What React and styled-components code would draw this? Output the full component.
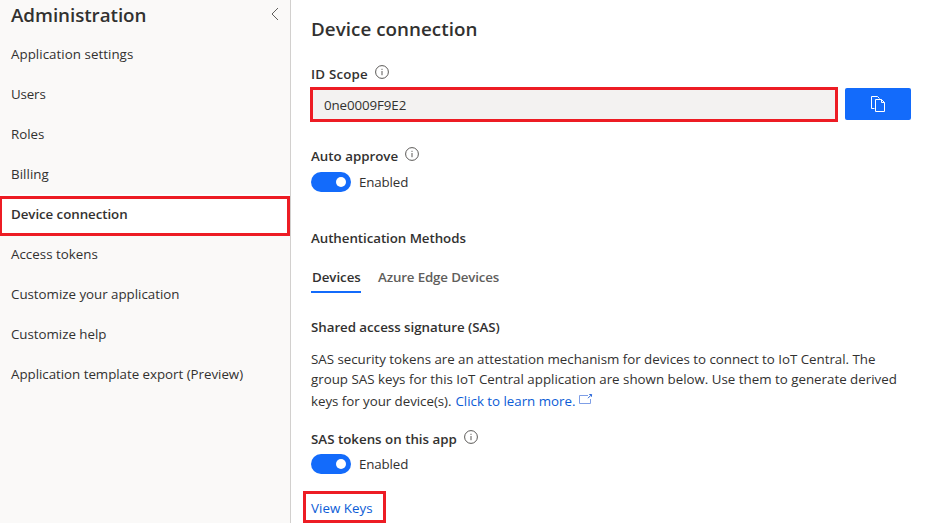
import React from 'react';
import styled, { createGlobalStyle } from 'styled-components';

const GlobalStyle = createGlobalStyle`
  * { box-sizing: border-box; }
  body {
    margin: 0;
    overflow: hidden;
    background: #fff;
    color: #323130;
    font: 400 13.33px/20px "Open Sans", "Noto Sans", sans-serif;
  }
`;

const Page = styled.div`
  display: flex;
  width: 932px;
  height: 523px;
  overflow: hidden;
`;

const Sidebar = styled.nav`
  width: 291px;
  flex: none;
  background: #faf9f8;
  border-right: 1px solid #d2d0ce;
`;

const SidebarHeader = styled.div`
  display: flex;
  align-items: flex-start;
  justify-content: space-between;
  height: 34px;
  padding: 0 11px;
`;

const SidebarTitle = styled.h1`
  margin: 0;
  font-size: 18.8px;
  font-weight: 600;
  line-height: 31px;
  letter-spacing: -0.05px;
`;

const Collapse = styled.svg`
  width: 8px;
  height: 14px;
  margin-top: 7px;
  fill: none;
  stroke: #605e5c;
`;

const NavItem = styled.a`
  position: relative;
  display: flex;
  align-items: center;
  height: 40px;
  padding-left: 11px;
  white-space: nowrap;
  background: ${(p) => (p.$active ? '#fff' : 'transparent')};
  font-weight: ${(p) => (p.$active ? 600 : 400)};
  letter-spacing: ${(p) => p.$track || 0}px;
`;

const NavHighlight = styled.span`
  position: absolute;
  top: 2px;
  left: -1px;
  width: 291px;
  height: 40px;
  border: 3px solid #ed1c24;
  z-index: 1;
`;

const Main = styled.main`
  flex: 1;
  padding: 14px 0 0 20px;
`;

const Heading = styled.h2`
  margin: 0;
  font-size: 18.8px;
  font-weight: 600;
  line-height: 30px;
  letter-spacing: 0.04px;
`;

const Label = styled.div`
  display: flex;
  height: 20px;
  margin-top: ${(p) => p.$top}px;
  font-weight: 600;
  letter-spacing: ${(p) => p.$track || 0}px;
`;

const Info = styled.svg`
  width: 14px;
  height: 14px;
  margin: 1px 0 0 7px;
  fill: none;
  stroke: #484644;
`;

const ScopeRow = styled.div`
  display: flex;
  align-items: flex-start;
  gap: 7px;
  height: 35px;
  margin: 3px 0 0 -1px;
`;

const ScopeField = styled.div`
  width: 528px;
  height: 35px;
  padding-left: 11px;
  line-height: 30px;
  letter-spacing: -0.1px;
  background: #f3f2f1;
  border: 3px solid #ed1c24;
`;

const CopyButton = styled.button`
  display: flex;
  align-items: center;
  justify-content: center;
  width: 66px;
  height: 32px;
  margin-top: 1px;
  padding: 0;
  border: 0;
  border-radius: 2px;
  background: #136bfb;

  svg {
    width: 16px;
    height: 16px;
    fill: none;
    stroke: #fff;
  }
`;

const ToggleRow = styled.div`
  display: flex;
  align-items: center;
  gap: 8px;
  height: 20px;
  margin-top: ${(p) => p.$top}px;
  letter-spacing: -0.14px;
`;

const Switch = styled.span`
  display: flex;
  align-items: center;
  justify-content: flex-end;
  width: 40px;
  height: 20px;
  padding-right: 5px;
  border-radius: 10px;
  background: #136bfb;

  &::after {
    content: '';
    width: 10px;
    height: 10px;
    border-radius: 50%;
    background: #fff;
  }
`;

const Tabs = styled.div`
  display: flex;
  gap: 17px;
  height: 26px;
  margin-top: 19px;
`;

const Tab = styled.span`
  height: 26px;
  padding-left: ${(p) => (p.$active ? 1 : 0)}px;
  width: ${(p) => (p.$active ? '50px' : 'auto')};
  font-weight: 600;
  letter-spacing: ${(p) => (p.$active ? -0.05 : -0.15)}px;
  color: ${(p) => (p.$active ? '#323130' : '#605e5c')};
  border-bottom: 2px solid ${(p) => (p.$active ? '#136bfb' : 'transparent')};
`;

const Paragraph = styled.div`
  margin-top: 12px;
  white-space: nowrap;
`;

const Line = styled.div`
  display: flex;
  margin-top: ${(p) => p.$top || 0}px;
  letter-spacing: ${(p) => p.$track || 0}px;
`;

const Link = styled.a`
  color: #0b5cd6;
  letter-spacing: ${(p) => p.$track || 0}px;
  margin-left: ${(p) => p.$gap || 0}px;
`;

const External = styled.svg`
  width: 14px;
  height: 12px;
  margin: 2px 0 0 4px;
  fill: none;
  stroke: #7f9fe6;
`;

const KeysBox = styled.div`
  width: 83px;
  height: 32px;
  margin: 17px 0 0 -8px;
  padding-left: 5px;
  line-height: 28px;
  border: 3px solid #ed1c24;
`;

const navItems = [
  { label: 'Application settings', track: 0.04 },
  { label: 'Users', track: -0.15 },
  { label: 'Roles' },
  { label: 'Billing', track: 0.05 },
  { label: 'Device connection', active: true, track: -0.06 },
  { label: 'Access tokens', track: 0.02 },
  { label: 'Customize your application', track: -0.02 },
  { label: 'Customize help', track: -0.03 },
  { label: 'Application template export (Preview)', track: -0.03 },
];

const InfoIcon = () => (
  <Info viewBox="0 0 14 14">
    <circle cx="7" cy="7" r="6.4" strokeWidth="0.9" />
    <path d="M7 6v4.2M7 3.8v1.1" strokeWidth="0.9" />
  </Info>
);

export default function App() {
  return (
    <>
      <GlobalStyle />
      <Page>
        <Sidebar>
          <SidebarHeader>
            <SidebarTitle>Administration</SidebarTitle>
            <Collapse viewBox="0 0 8 14">
              <path d="M7 1L1 7l6 6" />
            </Collapse>
          </SidebarHeader>
          {navItems.map((item) => (
            <NavItem key={item.label} $active={item.active} $track={item.track}>
              {item.label}
              {item.active && <NavHighlight />}
            </NavItem>
          ))}
        </Sidebar>
        <Main>
          <Heading>Device connection</Heading>
          <Label $top={20} $track={0.2}>ID Scope <InfoIcon /></Label>
          <ScopeRow>
            <ScopeField>0ne0009F9E2</ScopeField>
            <CopyButton aria-label="Copy">
              <svg viewBox="0 0 16 16">
                <path d="M4.5 12.5h-3v-12h6l2 2M5.5 15.5v-12h6l3 3v9zM11.5 3.5v3h3" />
              </svg>
            </CopyButton>
          </ScopeRow>
          <Label $top={24}>Auto approve <InfoIcon /></Label>
          <ToggleRow $top={6}><Switch />Enabled</ToggleRow>
          <Label $top={36} $track={-0.06}>Authentication Methods</Label>
          <Tabs>
            <Tab $active>Devices</Tab>
            <Tab>Azure Edge Devices</Tab>
          </Tabs>
          <Label $top={24} $track={-0.05}>Shared access signature (SAS)</Label>
          <Paragraph>
            <Line $track={-0.022}>SAS security tokens are an attestation mechanism for devices to connect to IoT Central. The</Line>
            <Line $track={-0.005}>group SAS keys for this IoT Central application are shown below. Use them to generate derived</Line>
            <Line $top={2} $track={-0.04}>
              keys for your device(s).
              <Link $gap={4} $track={-0.02}>Click to learn more.</Link>
              <External viewBox="0 0 14 12">
                <path d="M9 2.5H.5v8h11V6" />
                <path d="M9 5.2l3.6-3.6M10.3 1.5h2.2v2.2" stroke="#2b68da" />
              </External>
            </Line>
          </Paragraph>
          <Label $top={18}>SAS tokens on this app <InfoIcon /></Label>
          <ToggleRow $top={5}><Switch />Enabled</ToggleRow>
          <KeysBox><Link $track={0.05}>View Keys</Link></KeysBox>
        </Main>
      </Page>
    </>
  );
}
